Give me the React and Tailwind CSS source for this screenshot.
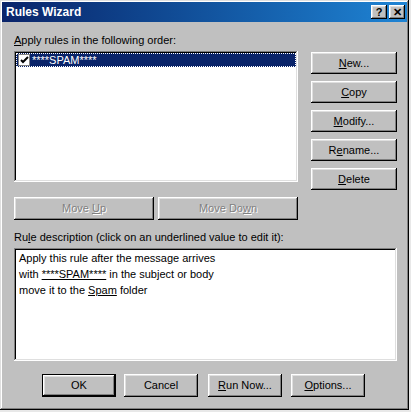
import React from "react";

// Bordes 3D clásicos de Windows: elevado (botones) y hundido (campos).
const RAISED =
  "shadow-[inset_-1px_-1px_#000,inset_1px_1px_#fff,inset_-2px_-2px_#808080,inset_2px_2px_#dfdfdf]";
const SUNKEN =
  "shadow-[inset_-1px_-1px_#fff,inset_1px_1px_#808080,inset_-2px_-2px_#dfdfdf,inset_2px_2px_#000]";

function Btn({ children, className = "", disabled = false, isDefault = false }) {
  const btn = (
    <button
      className={`flex shrink-0 items-center justify-center bg-[#c0c0c0] text-[11px] ${RAISED} ${
        disabled ? "text-[#808080] [text-shadow:1px_1px_#fff]" : "text-black"
      } ${isDefault ? "h-full w-full" : className}`}
    >
      {children}
    </button>
  );
  if (!isDefault) return btn;
  return <div className={`shrink-0 border border-black ${className}`}>{btn}</div>;
}

function TitleButton({ children }) {
  return (
    <div
      className={`flex h-[14px] w-[16px] items-center justify-center bg-[#c0c0c0] text-[11px] font-bold leading-none text-black ${RAISED}`}
    >
      {children}
    </div>
  );
}

export default function App() {
  return (
    <div className="h-[412px] w-[411px] overflow-hidden bg-[#e8e8e8] font-['Liberation_Sans',Arial,sans-serif]">
      <div className="h-[410px] w-[409px] bg-[#c0c0c0] p-[2px] shadow-[inset_-1px_-1px_#000,inset_1px_1px_#dfdfdf,inset_-2px_-2px_#808080,inset_2px_2px_#fff]">
        {/* Barra de título */}
        <div className="flex h-[20px] items-center bg-gradient-to-r from-[#0a246a] to-[#1f84d4] pl-[4px] pr-[2px]">
          <span className="text-[12px] font-bold text-white">Rules Wizard</span>
          <div className="ml-auto flex gap-[2px]">
            <TitleButton>?</TitleButton>
            <TitleButton>✕</TitleButton>
          </div>
        </div>

        <div className="pl-[12px] pr-[8px] pt-[11px] text-[11px] text-black">
          <div className="h-[14px] leading-[14px]">
            <u>A</u>pply rules in the following order:
          </div>

          <div className="mt-[4px] flex">
            {/* Lista de reglas */}
            <div className={`h-[131px] w-[284px] shrink-0 bg-white p-[2px] ${SUNKEN}`}>
              <div className="flex h-[14px] items-center border border-dotted border-white bg-[#0a246a]">
                <div className="ml-[1px] flex h-[12px] w-[12px] items-center justify-center border border-[#808080] bg-white">
                  <svg width="9" height="8" viewBox="0 0 9 8">
                    <path d="M1 4 L3 6 L8 1" stroke="#000" strokeWidth="2" fill="none" />
                  </svg>
                </div>
                <span className="ml-[2px] text-white">****SPAM****</span>
              </div>
            </div>

            <div className="ml-[13px] mt-[1px] flex flex-col gap-[7px]">
              <Btn className="h-[22px] w-[86px]"><span><u>N</u>ew...</span></Btn>
              <Btn className="h-[22px] w-[86px]"><span><u>C</u>opy</span></Btn>
              <Btn className="h-[22px] w-[86px]"><span><u>M</u>odify...</span></Btn>
              <Btn className="h-[22px] w-[86px]"><span>R<u>e</u>name...</span></Btn>
              <Btn className="h-[22px] w-[86px]"><span><u>D</u>elete</span></Btn>
            </div>
          </div>

          <div className="mt-[7px] flex gap-[4px]">
            <Btn disabled className="h-[23px] w-[140px]"><span>Move <u>U</u>p</span></Btn>
            <Btn disabled className="h-[23px] w-[140px]"><span>Move Do<u>w</u>n</span></Btn>
          </div>

          <div className="mt-[10px] h-[14px] leading-[14px]">
            Ru<u>l</u>e description (click on an underlined value to edit it):
          </div>

          {/* Descripción de la regla */}
          <div className={`mt-[4px] h-[113px] w-[383px] bg-white px-[5px] pt-[2px] leading-[16px] ${SUNKEN}`}>
            <div>Apply this rule after the message arrives</div>
            <div>
              with <u>****SPAM****</u> in the subject or body
            </div>
            <div>
              move it to the <u>Spam</u> folder
            </div>
          </div>

          <div className="ml-[28px] mt-[13px] flex gap-[8px]">
            <Btn isDefault className="h-[23px] w-[74px]">OK</Btn>
            <Btn className="h-[23px] w-[74px]">Cancel</Btn>
            <Btn className="ml-[2px] h-[23px] w-[74px]"><span><u>R</u>un Now...</span></Btn>
            <Btn className="ml-[1px] h-[23px] w-[74px]"><span><u>O</u>ptions...</span></Btn>
          </div>
        </div>
      </div>
    </div>
  );
}
